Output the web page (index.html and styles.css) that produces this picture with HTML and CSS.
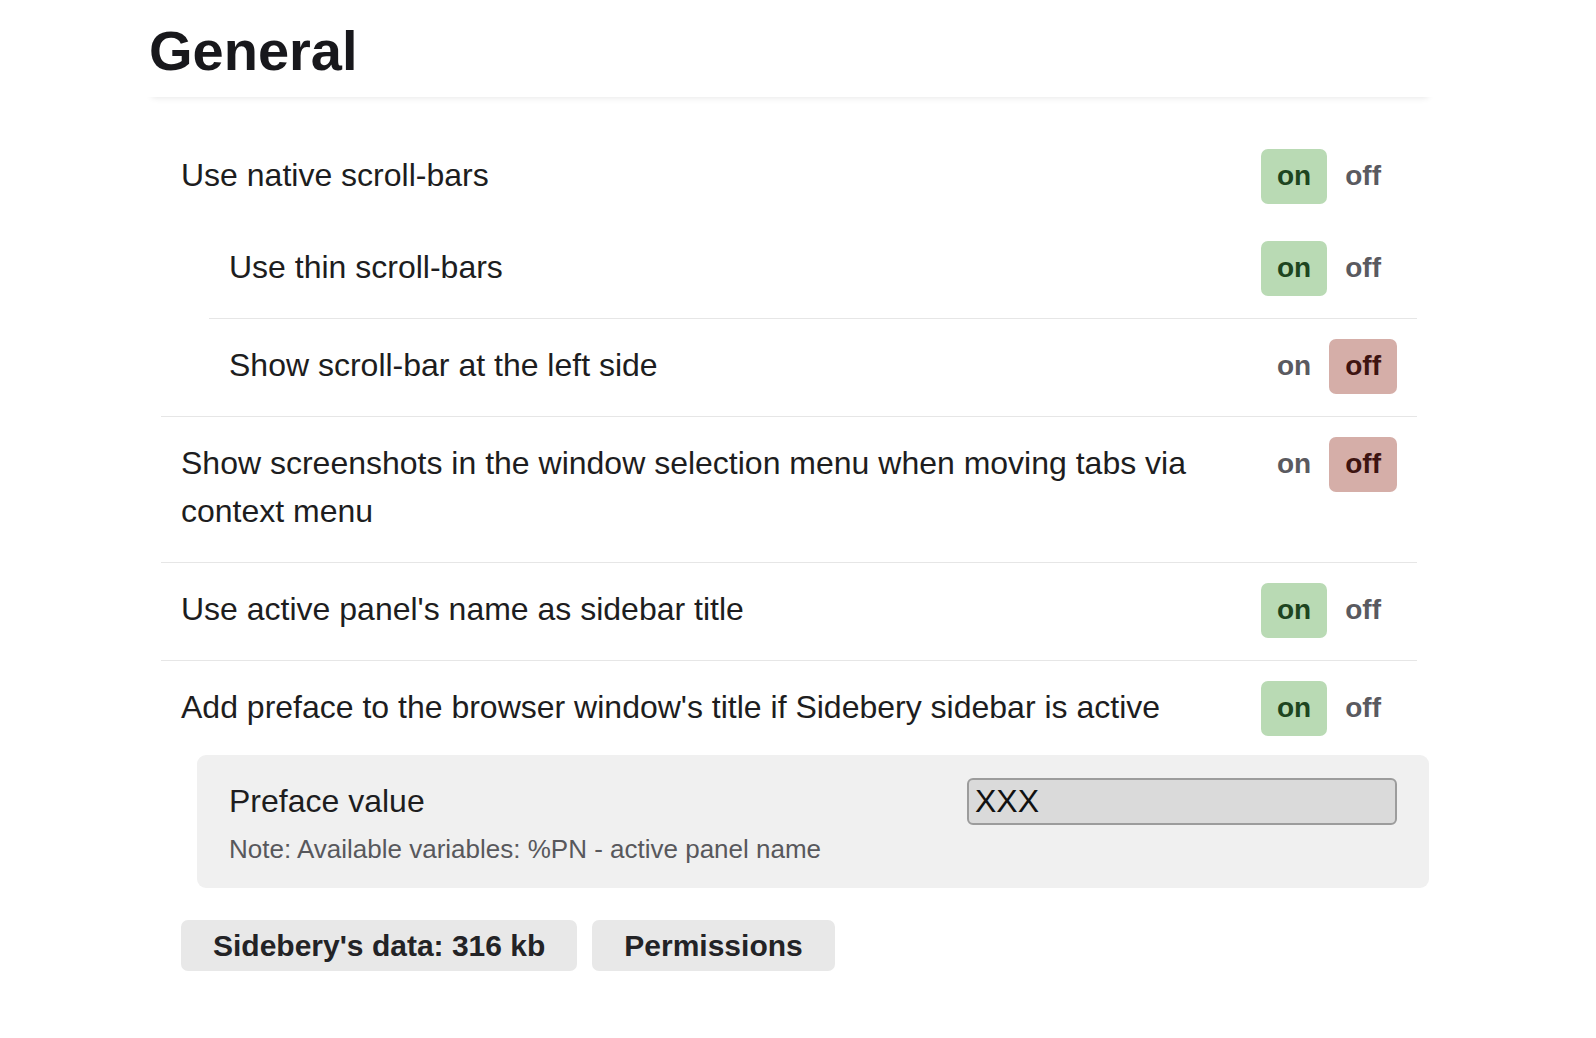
FILE: index.html
```html
<!DOCTYPE html>
<html>
<head>
<meta charset="utf-8">
<link rel="stylesheet" href="styles.css">
</head>
<body>
<div class="page">
  <header class="header"><h1 class="title">General</h1></header>
  <section class="settings">
    <div class="row row-parent">
      <div class="label">Use native scroll-bars</div>
      <div class="toggle"><span class="opt on-active">on</span><span class="opt">off</span></div>
    </div>
    <div class="sub">
      <div class="row">
        <div class="label">Use thin scroll-bars</div>
        <div class="toggle"><span class="opt on-active">on</span><span class="opt">off</span></div>
      </div>
      <div class="row sep">
        <div class="label">Show scroll-bar at the left side</div>
        <div class="toggle"><span class="opt">on</span><span class="opt off-active">off</span></div>
      </div>
    </div>
    <div class="row sep">
      <div class="label">Show screenshots in the window selection menu when moving tabs via context menu</div>
      <div class="toggle"><span class="opt">on</span><span class="opt off-active">off</span></div>
    </div>
    <div class="row sep">
      <div class="label">Use active panel's name as sidebar title</div>
      <div class="toggle"><span class="opt on-active">on</span><span class="opt">off</span></div>
    </div>
    <div class="row sep row-last">
      <div class="label">Add preface to the browser window's title if Sidebery sidebar is active</div>
      <div class="toggle"><span class="opt on-active">on</span><span class="opt">off</span></div>
    </div>
  </section>
  <div class="preface">
    <div class="preface-row">
      <div class="preface-label">Preface value</div>
      <div class="input">XXX</div>
    </div>
    <div class="note">Note: Available variables: %PN - active panel name</div>
  </div>
  <div class="actions">
    <div class="btn">Sidebery's data: 316 kb</div>
    <div class="btn">Permissions</div>
  </div>
</div>
</body>
</html>
```

FILE: styles.css
```css
html, body {
  margin: 0;
  padding: 0;
  background: #ffffff;
}
body {
  font-family: "Liberation Sans", Arial, sans-serif;
  color: #1d1d20;
}
.page {
  margin-left: 145px;
  width: 1290px;
}
.header {
  height: 97px;
  box-sizing: border-box;
  padding: 23px 0 0 4px;
  box-shadow: 0 7px 7px -7px rgba(0, 0, 0, 0.12);
}
.title {
  margin: 0;
  font-size: 56px;
  line-height: 56px;
  font-weight: 700;
  letter-spacing: 0;
  color: #18181c;
}
.settings {
  margin: 32px 18px 0 16px;
}
.row {
  display: flex;
  align-items: flex-start;
  justify-content: space-between;
  padding: 22px 20px 27px 20px;
}
.row-parent {
  padding-bottom: 22px;
}
.row-last {
  padding-bottom: 24px;
}
.sep {
  border-top: 1px solid #e6e6e6;
}
.sub {
  margin-left: 48px;
}
.label {
  font-size: 32px;
  line-height: 48px;
  color: #1d1d20;
  max-width: 1010px;
}
.toggle {
  display: flex;
  gap: 2px;
  margin: -2px 0 -5px 0;
  flex-shrink: 0;
}
.opt {
  height: 55px;
  box-sizing: border-box;
  line-height: 53px;
  padding: 0 16px 2px 16px;
  border-radius: 7px;
  font-size: 28px;
  font-weight: 700;
  color: #5a5a60;
}
.on-active {
  background: #b9dab4;
  color: #1d4520;
}
.off-active {
  background: #d5aea8;
  color: #3e1411;
}
.preface {
  margin: 0 6px 0 52px;
  background: #f0f0f0;
  border-radius: 9px;
  padding: 22px 32px 21px 32px;
}
.preface-row {
  display: flex;
  align-items: center;
  justify-content: space-between;
}
.preface-label {
  font-size: 32px;
  line-height: 48px;
  color: #1d1d20;
}
.input {
  width: 430px;
  height: 47px;
  box-sizing: border-box;
  border: 2px solid #9c9c9c;
  border-radius: 6px;
  background: #dadada;
  font-size: 32px;
  line-height: 43px;
  padding-left: 6px;
  color: #111;
}
.note {
  margin-top: 6px;
  font-size: 26px;
  line-height: 36px;
  color: #58585c;
}
.actions {
  display: flex;
  gap: 15px;
  margin: 32px 0 0 36px;
}
.btn {
  height: 51px;
  line-height: 51px;
  padding: 0 32px;
  border-radius: 7px;
  background: #e8e8e8;
  font-size: 30px;
  font-weight: 700;
  color: #232326;
}
```
